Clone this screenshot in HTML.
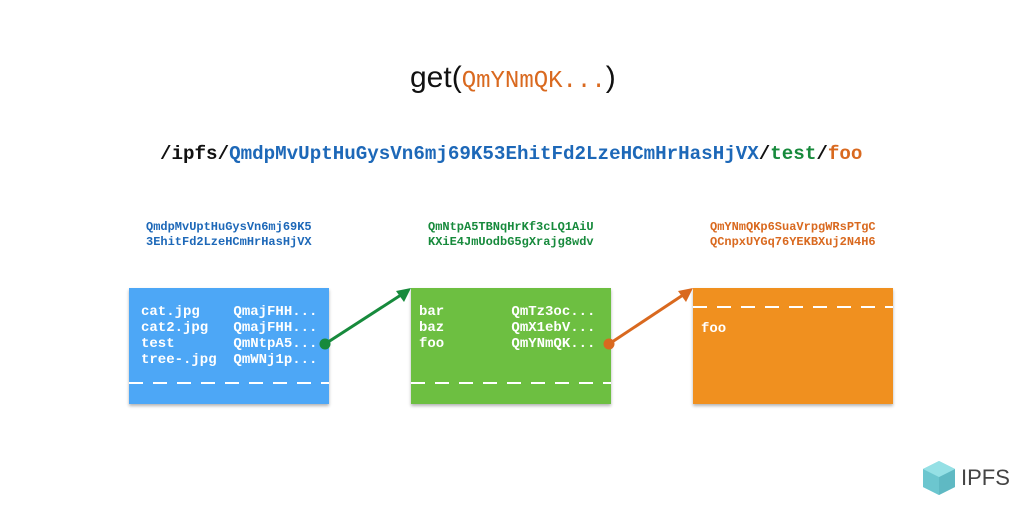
<!DOCTYPE html>
<html><head><meta charset="utf-8"><style>
body{margin:0;width:1024px;height:512px;background:#fff;position:relative;overflow:hidden;font-family:"Liberation Sans",sans-serif}
.a{position:absolute;white-space:pre}
.m{font-family:"Liberation Mono",monospace;font-weight:bold}
.box{position:absolute;top:288px;width:200px;height:116px;box-shadow:0 2px 3px rgba(0,0,0,.3)}
.dash{position:absolute;left:0;right:0;height:2px;background:repeating-linear-gradient(90deg,#fff 0 14px,transparent 14px 24px)}
.bt{position:absolute;color:#fff;font-size:14px;line-height:16px;white-space:pre}
</style></head><body>
<div class="a" style="left:410px;top:61px;font-size:30px;color:#111">get(<span class="m" style="font-weight:normal;color:#d9691f;font-size:24px">QmYNmQK...</span>)</div>
<div class="a m" style="left:160px;top:143px;font-size:19.2px;color:#111">/ipfs/<span style="color:#1d68b8">QmdpMvUptHuGysVn6mj69K53EhitFd2LzeHCmHrHasHjVX</span>/<span style="color:#178a3c">test</span>/<span style="color:#d9691f">foo</span></div>
<div class="a m" style="left:146px;top:220px;font-size:12px;line-height:15px;color:#1d68b8">QmdpMvUptHuGysVn6mj69K5
3EhitFd2LzeHCmHrHasHjVX</div>
<div class="a m" style="left:428px;top:220px;font-size:12px;line-height:15px;color:#178a3c">QmNtpA5TBNqHrKf3cLQ1AiU
KXiE4JmUodbG5gXrajg8wdv</div>
<div class="a m" style="left:710px;top:220px;font-size:12px;line-height:15px;color:#d9691f">QmYNmQKp6SuaVrpgWRsPTgC
QCnpxUYGq76YEKBXuj2N4H6</div>
<div class="box" style="left:129px;background:#4da7f6"><div class="dash" style="top:94px"></div>
<div class="bt m" style="left:12px;top:16px">cat.jpg    QmajFHH...
cat2.jpg   QmajFHH...
test       QmNtpA5...
tree-.jpg  QmWNj1p...</div></div>
<div class="box" style="left:411px;background:#6dbf41"><div class="dash" style="top:94px"></div>
<div class="bt m" style="left:8px;top:16px">bar        QmTz3oc...
baz        QmX1ebV...
foo        QmYNmQK...</div></div>
<div class="box" style="left:693px;background:#f0901f"><div class="dash" style="top:18px"></div>
<div class="bt m" style="left:8px;top:33px">foo</div></div>
<svg class="a" style="left:0;top:0" width="1024" height="512">
<line x1="325" y1="344" x2="404" y2="293" stroke="#178a3c" stroke-width="3"/>
<polygon points="411,288 396,291 404,302" fill="#178a3c"/>
<circle cx="325" cy="344" r="5.5" fill="#178a3c"/>
<line x1="609" y1="344" x2="686" y2="293" stroke="#d9691f" stroke-width="3"/>
<polygon points="693,288 678,291 686,302" fill="#d9691f"/>
<circle cx="609" cy="344" r="5.5" fill="#d9691f"/>
<g transform="translate(923,461)">
<polygon points="16,0 32,8 32,26 16,34 0,26 0,8" fill="#7fd5dc"/>
<polygon points="0,8 16,16 16,34 0,26" fill="#6cc6cf"/>
<polygon points="16,16 32,8 32,26 16,34" fill="#5fb9c3"/>
<polygon points="16,0 32,8 16,16 0,8" fill="#95e0e5"/>
</g>
</svg>
<div class="a" style="left:961px;top:465px;font-size:22px;color:#444">IPFS</div>
</body></html>
